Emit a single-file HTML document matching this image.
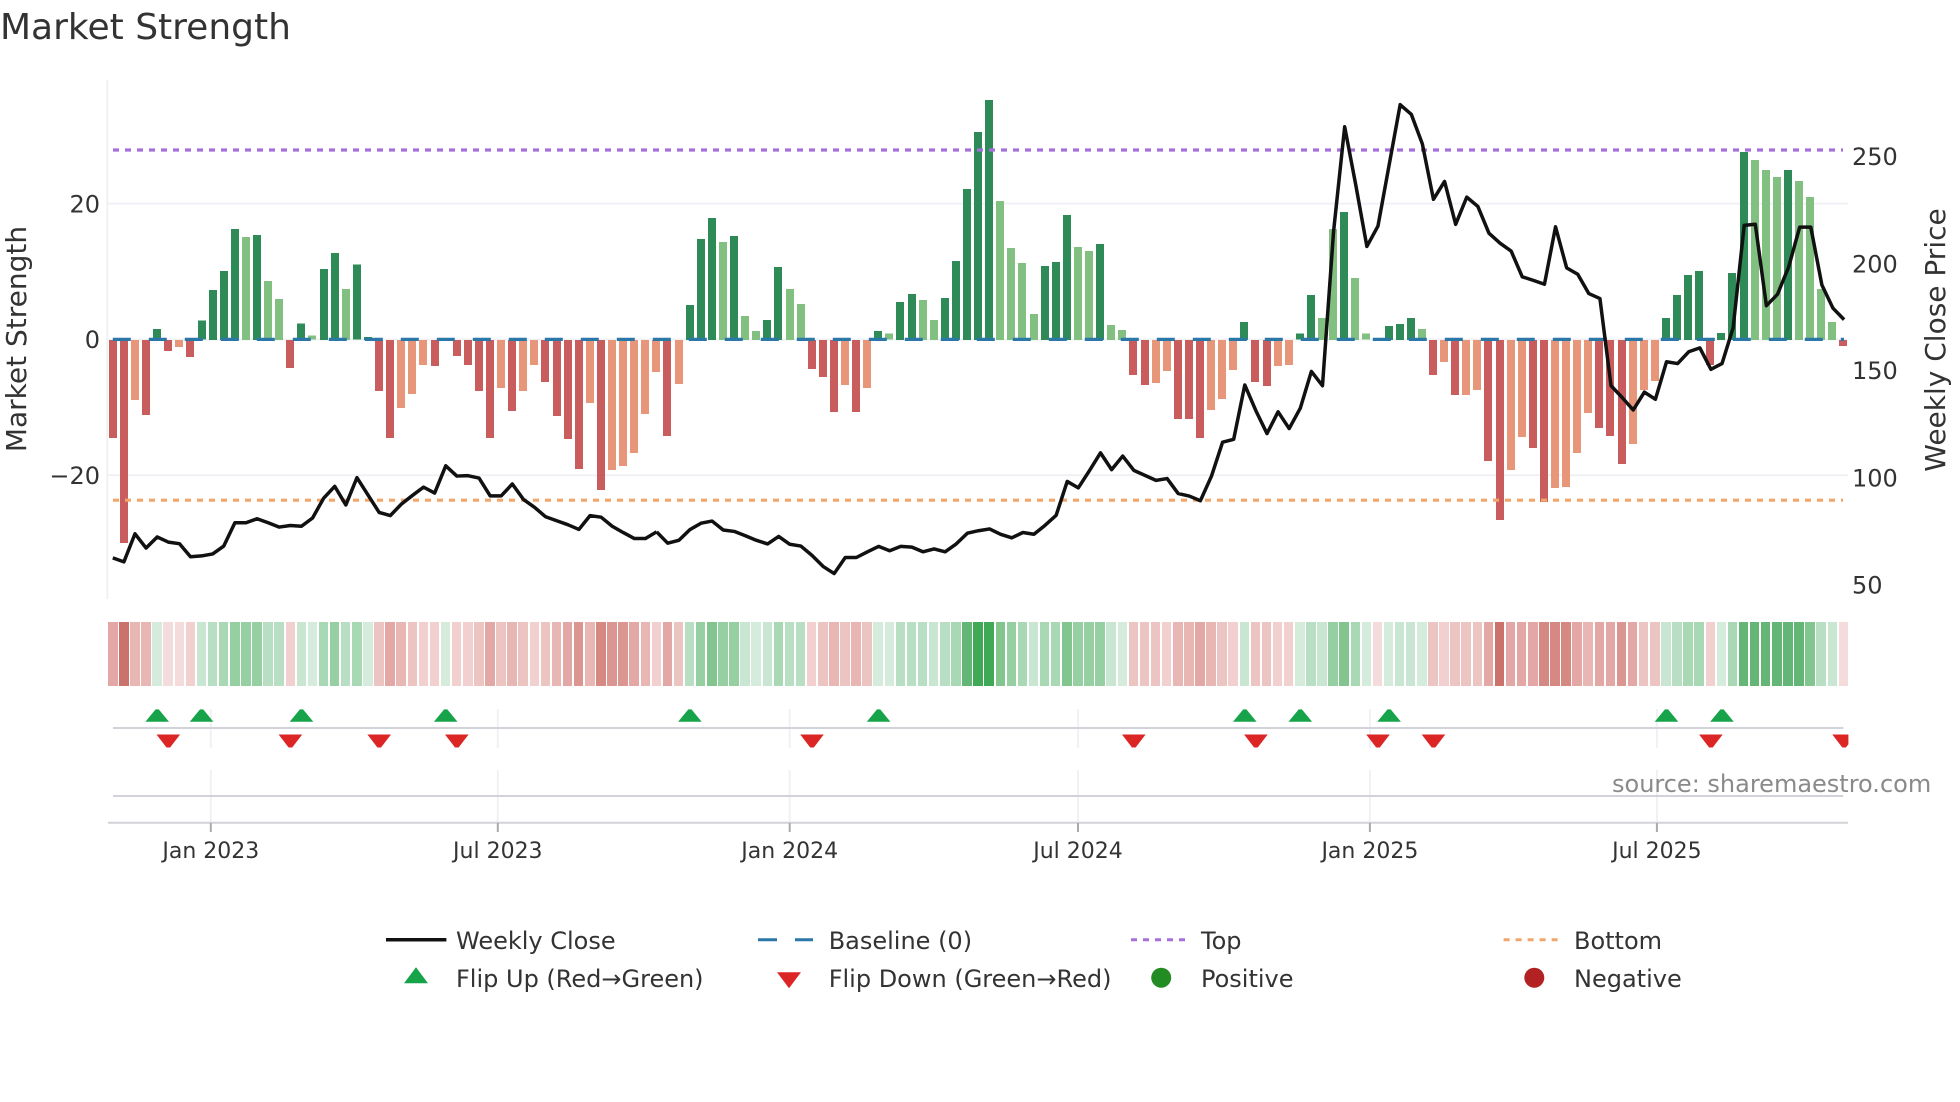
<!DOCTYPE html>
<html><head><meta charset="utf-8"><title>Market Strength</title>
<style>
html,body{margin:0;padding:0;background:#fff;width:1960px;height:1102px;overflow:hidden}
svg{position:absolute;left:0;top:0}
text{font-family:"DejaVu Sans","Liberation Sans",sans-serif;fill:#333}
#bars{position:absolute;left:107.25px;top:339.5px;width:1742.4px;height:0;display:flex;align-items:flex-start}
#bars i{flex:0 0 8px;margin:0 1.549px;display:block}
.a,.b{transform:translateY(-100%)}
.a{background:#2e8b57}.b{background:#82c082}.c{background:#c95c5c}.d{background:#e8967a}
#heat{position:absolute;left:108px;top:622px;width:1741.6px;height:64px;display:flex}
#heat i{flex:1 1 0;margin-right:1.6px;display:block}
.g1{background:#d5ecdc}.g2{background:#c8e6d1}.g3{background:#b8dfc3}.g4{background:#a9d8b5}.g5{background:#96cfa1}.g6{background:#82c58f}.g7{background:#64b676}.g8{background:#3fa955}
.r1{background:#f5dcdc}.r2{background:#f1d0cf}.r3{background:#ecc4c2}.r4{background:#e8b6b3}.r5{background:#e3a8a5}.r6{background:#dc9691}.r7{background:#d68983}.r8{background:#cb726c}
</style></head><body>
<svg width="1960" height="1102" viewBox="0 0 1960 1102">
<g stroke="#eff1f5" stroke-width="2" fill="none">
<path d="M107.3 80V599"/>
<path d="M107 203.6H1848M107 475.3H1848M107 339.5H1848"/>
<path d="M210.8 709V748M497.8 709V748M789.7 709V748M1078 709V748M1369.9 709V748M1656.9 709V748"/>
<path d="M210.8 770V822M497.8 770V822M789.7 770V822M1078 770V822M1369.9 770V822M1656.9 770V822"/>
</g>
<g stroke="#d2d3d8" stroke-width="2" fill="none">
<path d="M113 728H1843.3M113 796H1843.3M108 822.7H1848"/>
</g>
<path d="M210.8 823V832M497.8 823V832M789.7 823V832M1078 823V832M1369.9 823V832M1656.9 823V832" stroke="#aaa" stroke-width="2" fill="none"/>
</svg>
<div id="bars"><i class=c style=height:98px></i><i class=c style=height:203px></i><i class=d style=height:60px></i><i class=c style=height:75.5px></i><i class=a style=height:11px></i><i class=c style=height:11.5px></i><i class=d style=height:7.5px></i><i class=c style=height:17.5px></i><i class=a style=height:19.5px></i><i class=a style=height:50px></i><i class=a style=height:69px></i><i class=a style=height:111px></i><i class=b style=height:103px></i><i class=a style=height:105px></i><i class=b style=height:59px></i><i class=b style=height:41px></i><i class=c style=height:28px></i><i class=a style=height:16.5px></i><i class=b style=height:4.5px></i><i class=a style=height:71px></i><i class=a style=height:87px></i><i class=b style=height:51px></i><i class=a style=height:75.5px></i><i class=a style=height:3px></i><i class=c style=height:51px></i><i class=c style=height:98.5px></i><i class=d style=height:68px></i><i class=d style=height:54px></i><i class=d style=height:25px></i><i class=c style=height:26.5px></i><i class=a style=height:2px></i><i class=c style=height:16px></i><i class=c style=height:25px></i><i class=c style=height:51px></i><i class=c style=height:98px></i><i class=d style=height:48px></i><i class=c style=height:71px></i><i class=d style=height:51px></i><i class=d style=height:25px></i><i class=c style=height:42px></i><i class=c style=height:76px></i><i class=c style=height:99px></i><i class=c style=height:129px></i><i class=d style=height:63px></i><i class=c style=height:150px></i><i class=d style=height:130px></i><i class=d style=height:126px></i><i class=d style=height:113px></i><i class=d style=height:74px></i><i class=d style=height:32px></i><i class=c style=height:96px></i><i class=d style=height:44px></i><i class=a style=height:35px></i><i class=a style=height:101px></i><i class=a style=height:122px></i><i class=b style=height:98px></i><i class=a style=height:104px></i><i class=b style=height:24px></i><i class=b style=height:9px></i><i class=a style=height:20px></i><i class=a style=height:73px></i><i class=b style=height:51px></i><i class=b style=height:36px></i><i class=c style=height:29px></i><i class=c style=height:37px></i><i class=c style=height:72.5px></i><i class=d style=height:45px></i><i class=c style=height:72.5px></i><i class=d style=height:48px></i><i class=a style=height:9px></i><i class=b style=height:6.5px></i><i class=a style=height:38px></i><i class=a style=height:46px></i><i class=b style=height:40px></i><i class=b style=height:20px></i><i class=a style=height:42px></i><i class=a style=height:79px></i><i class=a style=height:151px></i><i class=a style=height:208px></i><i class=a style=height:240px></i><i class=b style=height:139px></i><i class=b style=height:92px></i><i class=b style=height:77px></i><i class=b style=height:26px></i><i class=a style=height:74px></i><i class=a style=height:78px></i><i class=a style=height:125px></i><i class=b style=height:93px></i><i class=b style=height:89px></i><i class=a style=height:96px></i><i class=b style=height:15px></i><i class=b style=height:10px></i><i class=c style=height:35px></i><i class=c style=height:45px></i><i class=d style=height:43px></i><i class=d style=height:31px></i><i class=c style=height:79px></i><i class=c style=height:79px></i><i class=c style=height:98px></i><i class=d style=height:70px></i><i class=d style=height:59px></i><i class=d style=height:30px></i><i class=a style=height:18px></i><i class=c style=height:42.5px></i><i class=c style=height:46px></i><i class=d style=height:26px></i><i class=d style=height:25px></i><i class=a style=height:6.5px></i><i class=a style=height:45px></i><i class=b style=height:22px></i><i class=b style=height:111px></i><i class=a style=height:128px></i><i class=b style=height:62px></i><i class=b style=height:6.5px></i><i class=c style=height:.5px></i><i class=a style=height:14px></i><i class=a style=height:16px></i><i class=a style=height:22px></i><i class=b style=height:11px></i><i class=c style=height:35px></i><i class=d style=height:22px></i><i class=c style=height:55px></i><i class=d style=height:55px></i><i class=d style=height:50px></i><i class=c style=height:121px></i><i class=c style=height:180px></i><i class=d style=height:130px></i><i class=d style=height:97px></i><i class=c style=height:108px></i><i class=c style=height:162px></i><i class=d style=height:148px></i><i class=d style=height:147px></i><i class=d style=height:113px></i><i class=d style=height:73px></i><i class=c style=height:88px></i><i class=c style=height:96px></i><i class=c style=height:124px></i><i class=d style=height:104px></i><i class=d style=height:50px></i><i class=d style=height:41px></i><i class=a style=height:22px></i><i class=a style=height:45px></i><i class=a style=height:65px></i><i class=a style=height:69px></i><i class=c style=height:25px></i><i class=a style=height:7px></i><i class=a style=height:67px></i><i class=a style=height:188px></i><i class=b style=height:180px></i><i class=b style=height:170px></i><i class=b style=height:163px></i><i class=a style=height:170px></i><i class=b style=height:159px></i><i class=b style=height:143px></i><i class=b style=height:51px></i><i class=b style=height:18px></i><i class=c style=height:6px></i></div>
<div id="heat"><i class=r5></i><i class=r8></i><i class=r4></i><i class=r4></i><i class=g1></i><i class=r1></i><i class=r1></i><i class=r2></i><i class=g2></i><i class=g3></i><i class=g4></i><i class=g5></i><i class=g5></i><i class=g5></i><i class=g3></i><i class=g3></i><i class=r2></i><i class=g2></i><i class=g1></i><i class=g4></i><i class=g5></i><i class=g3></i><i class=g4></i><i class=g1></i><i class=r3></i><i class=r5></i><i class=r4></i><i class=r3></i><i class=r2></i><i class=r2></i><i class=g1></i><i class=r2></i><i class=r2></i><i class=r3></i><i class=r5></i><i class=r3></i><i class=r4></i><i class=r3></i><i class=r2></i><i class=r3></i><i class=r4></i><i class=r5></i><i class=r6></i><i class=r4></i><i class=r7></i><i class=r6></i><i class=r6></i><i class=r5></i><i class=r4></i><i class=r2></i><i class=r5></i><i class=r3></i><i class=g3></i><i class=g5></i><i class=g6></i><i class=g5></i><i class=g5></i><i class=g2></i><i class=g1></i><i class=g2></i><i class=g4></i><i class=g3></i><i class=g3></i><i class=r2></i><i class=r3></i><i class=r4></i><i class=r3></i><i class=r4></i><i class=r3></i><i class=g1></i><i class=g1></i><i class=g3></i><i class=g3></i><i class=g3></i><i class=g2></i><i class=g3></i><i class=g4></i><i class=g7></i><i class=g8></i><i class=g8></i><i class=g6></i><i class=g5></i><i class=g4></i><i class=g2></i><i class=g4></i><i class=g4></i><i class=g6></i><i class=g5></i><i class=g5></i><i class=g5></i><i class=g2></i><i class=g1></i><i class=r3></i><i class=r3></i><i class=r3></i><i class=r2></i><i class=r4></i><i class=r4></i><i class=r5></i><i class=r4></i><i class=r3></i><i class=r2></i><i class=g2></i><i class=r3></i><i class=r3></i><i class=r2></i><i class=r2></i><i class=g1></i><i class=g3></i><i class=g2></i><i class=g5></i><i class=g6></i><i class=g4></i><i class=g1></i><i class=r1></i><i class=g1></i><i class=g2></i><i class=g2></i><i class=g1></i><i class=r3></i><i class=r2></i><i class=r3></i><i class=r3></i><i class=r3></i><i class=r5></i><i class=r8></i><i class=r5></i><i class=r5></i><i class=r5></i><i class=r7></i><i class=r7></i><i class=r7></i><i class=r5></i><i class=r4></i><i class=r5></i><i class=r5></i><i class=r6></i><i class=r5></i><i class=r3></i><i class=r3></i><i class=g2></i><i class=g3></i><i class=g4></i><i class=g4></i><i class=r2></i><i class=g1></i><i class=g4></i><i class=g7></i><i class=g7></i><i class=g7></i><i class=g7></i><i class=g7></i><i class=g7></i><i class=g6></i><i class=g3></i><i class=g2></i><i class=r1></i></div>
<svg width="1960" height="1102" viewBox="0 0 1960 1102">
<defs>
<clipPath id="pc"><rect x="108" y="700" width="1740.4" height="60"/></clipPath>
<path id="up" d="M-11.8 12.7L-1.6 .4H1.6L11.8 12.7Z" fill="#16a34a"/>
<path id="dn" d="M-11.8 0H11.8L1.8 13H-1.8Z" fill="#dc2626"/>
</defs>
<path d="M112.8 339.4H1844" stroke="#2a77a8" stroke-width="3.2" stroke-dasharray="18 18" fill="none"/>
<path d="M113 150H1843" stroke="#a56fdc" stroke-width="3.2" stroke-dasharray="6 6" fill="none"/>
<path d="M113 500.2H1843" stroke="#f2a66c" stroke-width="3.2" stroke-dasharray="6 6" fill="none"/>
<g fill="none" stroke="#111" stroke-width="3.5" stroke-linejoin="round">
<polyline vector-effect="non-scaling-stroke" transform="translate(112.8 0) scale(11.098 .3954)" points="0,1411 1,1421 2,1350 3,1386 4,1358 5,1371 6,1375 7,1408 8,1406 9,1401 10,1381 11,1322 12,1322 13,1312 14,1322 15,1333 16,1329 17,1331 18,1310 19,1260 20,1230 21,1277 22,1208 23,1252 24,1296 25,1304 26,1275 27,1253 28,1232 29,1247 30,1178 31,1204 32,1203 33,1209 34,1254 35,1254 36,1224 37,1263 38,1283 39,1307 40,1317 41,1327 42,1339 43,1304 44,1308 45,1331 46,1347 47,1362 48,1362 49,1345"/>
<polyline vector-effect="non-scaling-stroke" transform="translate(112.8 60) scale(11.098 .35714)" points="49,1321 50,1353 51,1345 52,1315 53,1297 54,1291 55,1316 56,1320 57,1332 58,1345 59,1355 60,1334 61,1356 62,1361 63,1387 64,1418 65,1438 66,1393 67,1393 68,1377 69,1362 70,1374 71,1362 72,1364 73,1377 74,1369 75,1377 76,1355 77,1325 78,1318 79,1313 80,1328 81,1338 82,1323 83,1328 84,1303 85,1275 86,1180 87,1198 88,1150 89,1100 90,1147 91,1109 92,1149 93,1163 94,1177 95,1172 96,1214 97,1221 98,1234 99,1165 100,1070 101,1062 102,910 103,982 104,1046 105,985 106,1032 107,975 108,872 109,912 110,480 111,187 112,350 113,522 114,465 115,295 116,125 117,152 118,235 119,390 120,340 121,460 122,384 123,410 124,485 125,513 126,535 127,607 128,617 129,628 130,467 131,582 132,600 133,654 134,668 135,912 136,945 137,980 138,930 139,950 140,845 141,850 142,817 143,806 144,866 145,850 146,750 147,463 148,460 149,688 150,656 151,580 152,468 153,468 154,630 155,695 156,727"/>
</g>
<g transform="translate(0 709)">
<use href="#up" x="157.2"/><use href="#up" x="201.6"/><use href="#up" x="301.5"/><use href="#up" x="445.7"/><use href="#up" x="689.9"/><use href="#up" x="878.6"/><use href="#up" x="1244.8"/><use href="#up" x="1300.3"/><use href="#up" x="1389.1"/><use href="#up" x="1666.5"/><use href="#up" x="1722"/>
</g>
<g clip-path="url(#pc)"><g transform="translate(0 734.5)">
<use href="#dn" x="168.3"/><use href="#dn" x="290.4"/><use href="#dn" x="379.2"/><use href="#dn" x="456.8"/><use href="#dn" x="812"/><use href="#dn" x="1133.8"/><use href="#dn" x="1255.9"/><use href="#dn" x="1378"/><use href="#dn" x="1433.5"/><use href="#dn" x="1710.9"/><use href="#dn" x="1844.1"/>
</g></g>
<text x="0" y="39" font-size="36">Market Strength</text>
<g font-size="24">
<text x="100" y="212.5" text-anchor="end">20</text>
<text x="100" y="348" text-anchor="end">0</text>
<text x="100" y="484" text-anchor="end">−20</text>
<text x="1852" y="165">250</text>
<text x="1852" y="272.3">200</text>
<text x="1852" y="379">150</text>
<text x="1852" y="486.3">100</text>
<text x="1852" y="593.5">50</text>
</g>
<g font-size="22" text-anchor="middle">
<text x="210.8" y="858">Jan 2023</text>
<text x="497.8" y="858">Jul 2023</text>
<text x="789.7" y="858">Jan 2024</text>
<text x="1078" y="858">Jul 2024</text>
<text x="1369.9" y="858">Jan 2025</text>
<text x="1656.9" y="858">Jul 2025</text>
</g>
<text font-size="28" text-anchor="middle" transform="translate(26 339) rotate(-90)">Market Strength</text>
<text font-size="28" text-anchor="middle" transform="translate(1945 340) rotate(-90)">Weekly Close Price</text>
<text x="1612" y="792" font-size="24" style="fill:#8a8a8a">source: sharemaestro.com</text>
<path d="M386 939.7H446.4" stroke="#111" stroke-width="3.5" fill="none"/>
<path d="M758 939.7H777M795 939.7H813" stroke="#2a77a8" stroke-width="3" fill="none"/>
<path d="M1131 939.7H1187" stroke="#a56fdc" stroke-width="3" stroke-dasharray="6 6" fill="none"/>
<path d="M1503.6 939.7H1560" stroke="#f2a66c" stroke-width="3" stroke-dasharray="6 6" fill="none"/>
<path d="M404 983.3L416 967.3L428 983.3Z" fill="#16a34a"/>
<path d="M777 972.3H801L789 988.3Z" fill="#dc2626"/>
<circle cx="1161.2" cy="977.7" r="10" fill="#228b22"/>
<circle cx="1534.3" cy="977.7" r="10" fill="#b22222"/>
<g font-size="24">
<text x="456" y="949">Weekly Close</text>
<text x="828.7" y="949">Baseline (0)</text>
<text x="1201" y="949">Top</text>
<text x="1574" y="949">Bottom</text>
<text x="456" y="987">Flip Up (Red→Green)</text>
<text x="828.7" y="987">Flip Down (Green→Red)</text>
<text x="1201" y="987">Positive</text>
<text x="1574" y="987">Negative</text>
</g>
</svg>
</body></html>
